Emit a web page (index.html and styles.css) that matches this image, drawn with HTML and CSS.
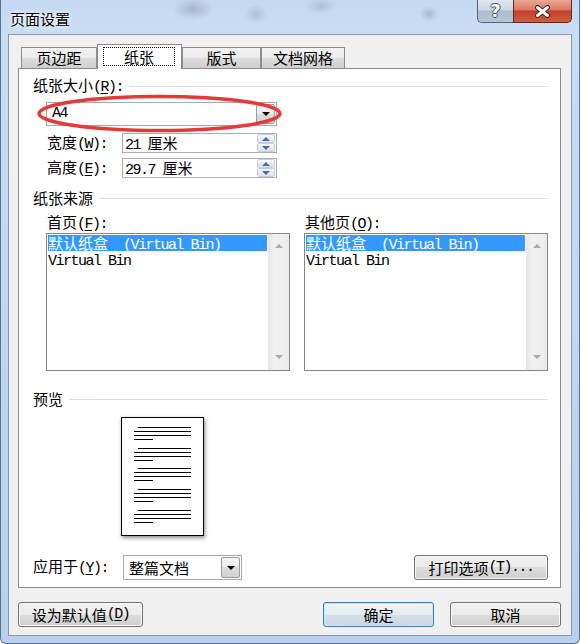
FILE: index.html
```html
<!DOCTYPE html>
<html lang="zh-CN">
<head>
    <meta charset="UTF-8">
    <title>页面设置</title>
    <link rel="stylesheet" href="styles.css">
</head>
<body>
    <div class="window">
        <div class="titlebar">
            <div class="title">页面设置</div>
            <div class="caption-btns">
                <div class="cap help">?</div>
                <div class="cap close">
                    <svg width="17" height="13" viewBox="0 0 17 13">
                        <path d="M3.5 2.5 L13.5 10.5 M13.5 2.5 L3.5 10.5" stroke="#4b2520" stroke-width="5" stroke-linecap="round" fill="none"/>
                        <path d="M3.5 2.5 L13.5 10.5 M13.5 2.5 L3.5 10.5" stroke="#fff" stroke-width="3" stroke-linecap="round" fill="none"/>
                    </svg>
                </div>
            </div>
        </div>

        <div class="client">
            <div class="tabs">
                <div class="tab t1">页边距</div>
                <div class="tab active"><span class="focus">纸张</span></div>
                <div class="tab t3">版式</div>
                <div class="tab t4">文档网格</div>
            </div>

            <div class="panel">
                <!-- 纸张大小 -->
                <div class="group-hdr"><span>纸张大小<span class="lat">(<u>R</u>):</span></span><i class="rule"></i></div>
                <div class="size-wrap">
                    <div class="combo size-combo">
                        <span class="combo-val"><span class="lat">A4</span></span>
                        <span class="drop"></span>
                    </div>
                    <svg class="mark" width="247" height="39" viewBox="0 0 247 39">
                        <ellipse cx="123.5" cy="19.5" rx="120.5" ry="17" fill="none" stroke="#e8393a" stroke-width="3.5"/>
                    </svg>
                </div>
                <div class="spin-row first">
                    <span class="spin-label">宽度<span class="lat">(<u>W</u>):</span></span>
                    <div class="spin">
                        <span class="spin-val"><span class="lat">21 </span>厘米</span>
                        <span class="spinner"><b class="up"></b><b class="down"></b></span>
                    </div>
                </div>
                <div class="spin-row">
                    <span class="spin-label">高度<span class="lat">(<u>E</u>):</span></span>
                    <div class="spin">
                        <span class="spin-val"><span class="lat">29.7 </span>厘米</span>
                        <span class="spinner"><b class="up"></b><b class="down"></b></span>
                    </div>
                </div>

                <!-- 纸张来源 -->
                <div class="group-hdr src-hdr"><span>纸张来源</span><i class="rule"></i></div>
                <div class="sources">
                    <div class="src-col">
                        <span class="src-label">首页<span class="lat">(<u>F</u>):</span></span>
                        <div class="listbox">
                            <div class="items">
                                <div class="item sel">默认纸盒<span class="lat">  (Virtual Bin)</span></div>
                                <div class="item"><span class="lat">Virtual Bin</span></div>
                            </div>
                            <div class="vscroll"></div>
                        </div>
                    </div>
                    <div class="src-col">
                        <span class="src-label">其他页<span class="lat">(<u>O</u>):</span></span>
                        <div class="listbox">
                            <div class="items">
                                <div class="item sel">默认纸盒<span class="lat">  (Virtual Bin)</span></div>
                                <div class="item"><span class="lat">Virtual Bin</span></div>
                            </div>
                            <div class="vscroll"></div>
                        </div>
                    </div>
                </div>

                <!-- 预览 -->
                <div class="group-hdr pv-hdr"><span>预览</span><i class="rule"></i></div>
                <div class="page">
                    <svg width="81" height="117" viewBox="0 0 81 117">
                        <g stroke="#000" stroke-width="1">
                            <path d="M16 9.5H69 M12 13.5H69 M12 17.5H69 M12 21.5H31"/>
                            <path d="M16 30.5H69 M12 34.5H69 M12 38.5H69 M12 42.5H31"/>
                            <path d="M16 50.5H69 M12 54.5H69 M12 58.5H69 M12 62.5H31"/>
                            <path d="M16 71.5H69 M12 75.5H69 M12 79.5H69 M12 83.5H31"/>
                            <path d="M16 92.5H69 M12 96.5H69 M12 100.5H69 M12 104.5H31"/>
                        </g>
                    </svg>
                </div>

                <div class="apply-row">
                    <span class="apply-label">应用于<span class="lat">(<u>Y</u>):</span></span>
                    <div class="combo apply-combo">
                        <span class="combo-val">整篇文档</span>
                        <span class="drop"></span>
                    </div>
                    <div class="btn print-btn">打印选项<span class="lat">(<u>T</u>)...</span></div>
                </div>
            </div>

            <div class="dlg-btns">
                <div class="btn default-btn">设为默认值<span class="lat">(<u>D</u>)</span></div>
                <div class="btn ok-btn">确定</div>
                <div class="btn cancel-btn">取消</div>
            </div>
        </div>
    </div>
</body>
</html>
```

FILE: styles.css
```css
* {
    box-sizing: border-box;
}
body {
    margin: 0;
    font-family: "Noto Sans CJK SC", "Noto Sans", sans-serif;
    font-size: 15px;
    color: #000;
    background: #fff;
}
.lat {
    font-family: "Liberation Mono", "Noto Sans CJK SC", monospace;
    letter-spacing: -1.5px;
    white-space: pre;
}
.lat u {
    text-underline-offset: 2px;
}

/* window frame */
.window {
    width: 580px;
    height: 644px;
    display: flex;
    flex-direction: column;
    padding: 0 7px 7px;
    border: 1px solid #5b7291;
    border-top: 0;
    border-radius: 0 0 6px 6px;
    background:
        radial-gradient(ellipse 20px 11px at 192px 9px, rgba(80, 90, 110, 0.28), transparent),
        radial-gradient(ellipse 12px 9px at 255px 14px, rgba(80, 90, 110, 0.22), transparent),
        radial-gradient(ellipse 16px 8px at 320px 6px, rgba(80, 90, 110, 0.2), transparent),
        radial-gradient(ellipse 10px 8px at 428px 14px, rgba(80, 90, 110, 0.25), transparent),
        linear-gradient(180deg, #c3d9f1 0, #c9ddf3 30px, #b8d0eb 100%);
}
.titlebar {
    height: 34px;
    flex: none;
    display: flex;
    justify-content: space-between;
    align-items: flex-start;
}
.title {
    margin: 11px 0 0 2px;
    line-height: 16px;
    text-shadow: 0 0 6px #fff, 0 0 3px #fff;
}
.caption-btns {
    display: flex;
}
.cap {
    height: 23px;
    display: flex;
    align-items: center;
    justify-content: center;
    border: 1px solid #4f627c;
    border-top: 0;
}
.help {
    width: 36px;
    border-right: 0;
    border-radius: 0 0 0 5px;
    background: linear-gradient(#e1e8f1, #cbd6e2 45%, #adbccd 50%, #b9c7d6 100%);
    color: #fff;
    font: bold 18px/1 "DejaVu Sans", sans-serif;
    text-shadow: 1px 0 0 #4a566a, -1px 0 0 #4a566a, 0 1px 0 #4a566a, 0 -1px 0 #4a566a;
}
.close {
    width: 59px;
    border-color: #5b2a22;
    border-radius: 0 0 5px 0;
    background: linear-gradient(#eaa797, #db7863 45%, #c4412b 50%, #d15c42 100%);
}

/* client area */
.client {
    flex: 1;
    display: flex;
    flex-direction: column;
    background: #f0f0f0;
    border: 1px solid #8499b3;
    padding: 9px 10px 0 9px;
}
.tabs {
    display: flex;
    align-items: flex-end;
    height: 25px;
    margin: 0 0 -1px 3px;
    position: relative;
    z-index: 1;
}
.tab {
    height: 21px;
    margin-bottom: 1px;
    display: flex;
    align-items: center;
    justify-content: center;
    line-height: 16px;
    border: 1px solid #898c95;
    border-bottom: 0;
    background: linear-gradient(#f3f3f3, #ebebeb 50%, #dddddd 50%, #cfcfcf);
}
.t1 {
    width: 76px;
}
.t3 {
    width: 79px;
}
.t4 {
    width: 84px;
}
.tab.active {
    width: 85px;
    height: 25px;
    margin-bottom: 0;
    padding: 2px 6px 3px 5px;
    background: #fff;
    align-items: stretch;
}
.focus {
    flex: 1;
    display: flex;
    align-items: center;
    justify-content: center;
    border: 1px dotted #000;
}

.panel {
    height: 520px;
    display: flex;
    flex-direction: column;
    background: #fff;
    border: 1px solid #898c95;
    padding: 8px 12px 0 14px;
}
.group-hdr {
    display: flex;
    align-items: center;
    height: 18px;
    line-height: 18px;
    white-space: nowrap;
}
.rule {
    flex: 1;
    height: 1px;
    margin-left: 6px;
    background: #d5dfe5;
}

/* combos */
.size-wrap {
    position: relative;
    width: 231px;
    margin: 7px 0 0 13px;
}
.combo {
    display: flex;
    align-items: stretch;
    background: #fff;
    border: 1px solid #a5a7ac;
}
.size-combo {
    height: 24px;
}
.combo-val {
    flex: 1;
    display: flex;
    align-items: center;
    padding-left: 5px;
    line-height: 16px;
}
.drop {
    width: 19px;
    margin: 1px;
    display: flex;
    align-items: center;
    justify-content: center;
    border: 1px solid #9b9b9b;
    border-radius: 2px;
    background: linear-gradient(#f5f5f5, #ececec 50%, #dcdcdc 50%, #d2d2d2);
}
.drop::after {
    content: "";
    border-left: 4px solid transparent;
    border-right: 4px solid transparent;
    border-top: 4px solid #000;
}
.mark {
    position: absolute;
    left: -10px;
    top: -8px;
}

/* spin boxes */
.spin-row {
    display: flex;
    align-items: center;
    margin: 5px 0 0 14px;
}
.spin-row.first {
    margin-top: 7px;
}
.spin-label {
    width: 75px;
    line-height: 16px;
}
.spin {
    width: 155px;
    height: 20px;
    display: flex;
    background: #fff;
    border: 1px solid #abadb3;
}
.spin-val {
    flex: 1;
    padding-left: 2px;
    line-height: 18px;
}
.spinner {
    width: 18px;
    margin-right: 1px;
    display: flex;
    flex-direction: column;
}
.spinner b {
    flex: 1;
    display: flex;
    align-items: center;
    justify-content: center;
    border: 1px solid #c6cdd7;
    border-radius: 2px;
    background: linear-gradient(#f8fafc, #e9edf2 50%, #dde3ea);
}
.spinner .up::after {
    content: "";
    border-left: 4px solid transparent;
    border-right: 4px solid transparent;
    border-bottom: 4px solid #4a6cad;
}
.spinner .down::after {
    content: "";
    border-left: 4px solid transparent;
    border-right: 4px solid transparent;
    border-top: 4px solid #4a6cad;
}

/* paper source */
.src-hdr {
    margin-top: 11px;
}
.sources {
    display: grid;
    grid-template-columns: 244px 244px;
    column-gap: 14px;
    margin: 6px 0 0 13px;
}
.src-label {
    display: block;
    height: 18px;
    line-height: 18px;
    padding-left: 1px;
}
.listbox {
    height: 138px;
    margin-top: 2px;
    display: flex;
    background: #fff;
    border: 1px solid #828790;
}
.items {
    flex: 1;
    padding-top: 1px;
    white-space: nowrap;
}
.item {
    height: 16px;
    line-height: 16px;
    padding-left: 1px;
}
.item.sel {
    margin: 0 1px;
    padding-left: 0;
    background: #3399ff;
    color: #fff;
}
.vscroll {
    width: 21px;
    display: flex;
    flex-direction: column;
    justify-content: space-between;
    align-items: center;
    padding: 10px 0 11px;
    background: linear-gradient(90deg, #e6e6e6, #f1f1f1 30%, #ececec);
}
.vscroll::before {
    content: "";
    border-left: 4px solid transparent;
    border-right: 4px solid transparent;
    border-bottom: 4px solid #a8a8a8;
}
.vscroll::after {
    content: "";
    border-left: 4px solid transparent;
    border-right: 4px solid transparent;
    border-top: 4px solid #a8a8a8;
}

/* preview */
.pv-hdr {
    margin-top: 19px;
}
.page {
    width: 83px;
    height: 119px;
    margin: 9px 0 0 88px;
    background: #fff;
    border: 1px solid #000;
    box-shadow: 1px 2px 4px rgba(0, 0, 0, 0.45);
}
.page svg {
    display: block;
}

/* apply row */
.apply-row {
    display: flex;
    align-items: center;
    height: 25px;
    margin-top: 19px;
}
.apply-label {
    width: 90px;
    line-height: 16px;
}
.apply-combo {
    width: 119px;
    height: 25px;
}

/* buttons */
.btn {
    height: 25px;
    display: flex;
    align-items: center;
    justify-content: center;
    line-height: 16px;
    white-space: nowrap;
    border: 1px solid #707070;
    border-radius: 3px;
    background: linear-gradient(#f2f2f2, #ebebeb 50%, #dddddd 50%, #cfcfcf);
    box-shadow: inset 0 0 0 1px #fbfbfb;
}
.print-btn {
    width: 134px;
    margin-left: auto;
}
.dlg-btns {
    display: flex;
    margin-top: 14px;
}
.default-btn {
    width: 125px;
}
.ok-btn {
    width: 111px;
    margin-left: auto;
    border-color: #3c7fb1;
    background: linear-gradient(#eef4f8, #e4ecf2 50%, #d4e0e9 50%, #c9d7e2);
    box-shadow: inset 0 0 0 1px #c2e6f8;
}
.cancel-btn {
    width: 111px;
    margin-left: 16px;
}
```
